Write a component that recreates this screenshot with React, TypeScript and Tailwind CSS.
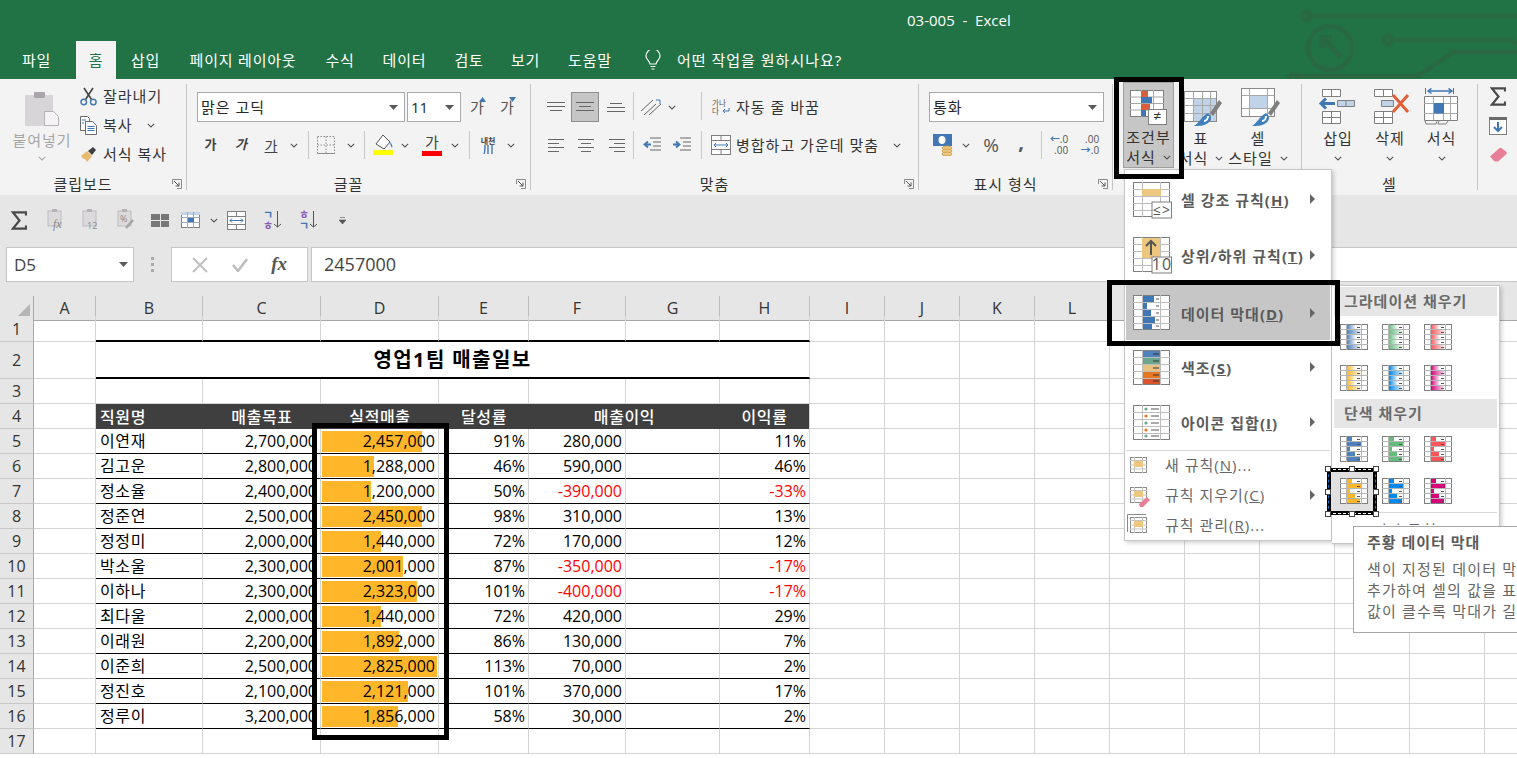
import React from "react";

const GRID = "grid grid-cols-[34px_62px_107px_118px_118px_90px_97px_94px_90px_repeat(10,75px)]";
const CELL = "border-r border-b border-[#d4d4d4] overflow-hidden whitespace-nowrap flex items-center";

const rows: [string, string, string, string, string, string, number][] = [
  ["이연재", "2,700,000", "2,457,000", "91%", "280,000", "11%", 100],
  ["김고운", "2,800,000", "1,288,000", "46%", "590,000", "46%", 52],
  ["정소율", "2,400,000", "1,200,000", "50%", "-390,000", "-33%", 49],
  ["정준연", "2,500,000", "2,450,000", "98%", "310,000", "13%", 100],
  ["정정미", "2,000,000", "1,440,000", "72%", "170,000", "12%", 59],
  ["박소울", "2,300,000", "2,001,000", "87%", "-350,000", "-17%", 81],
  ["이하나", "2,300,000", "2,323,000", "101%", "-400,000", "-17%", 95],
  ["최다울", "2,000,000", "1,440,000", "72%", "420,000", "29%", 59],
  ["이래원", "2,200,000", "1,892,000", "86%", "130,000", "7%", 77],
  ["이준희", "2,500,000", "2,825,000", "113%", "70,000", "2%", 115],
  ["정진호", "2,100,000", "2,121,000", "101%", "370,000", "17%", 86],
  ["정루이", "3,200,000", "1,856,000", "58%", "30,000", "2%", 76],
];

const tabs: [string, string][] = [
  ["파일", "w-[57px]"],
  ["삽입", "w-[57px] ml-px"],
  ["페이지 레이아웃", "w-[138px]"],
  ["수식", "w-[56px]"],
  ["데이터", "w-[73px]"],
  ["검토", "w-[56px]"],
  ["보기", "w-[57px]"],
  ["도움말", "w-[72px]"],
];

const Chev = ({ c = "#555" }: { c?: string }) => (
  <svg width="8" height="5" viewBox="0 0 8 5" className="shrink-0">
    <path d="M.8.8 4 4 7.2.8" fill="none" stroke={c} strokeWidth="1.1" />
  </svg>
);

const Caret = () => (
  <svg width="9" height="5" viewBox="0 0 9 5" className="shrink-0">
    <path d="M0 0h9L4.5 5z" fill="#5a5a5a" />
  </svg>
);

const Launcher = () => (
  <svg width="10" height="10" viewBox="0 0 10 10">
    <path d="M.5 5V.5H9.5V9.5H5" fill="none" stroke="#8a8a8a" />
    <path d="M2 2l5 5M7 3.5V7H3.5" fill="none" stroke="#555" />
  </svg>
);

const Slot = ({ className = "", children }: { className?: string; children?: React.ReactNode }) => (
  <div className={`flex items-center justify-center shrink-0 h-full ${className}`}>{children}</div>
);

const VSep = ({ className = "" }: { className?: string }) => <div className={`w-px h-[28px] bg-[#c8c8c8] shrink-0 ${className}`} />;

const Group = ({ label, launch, className, children }: { label?: string; launch?: boolean; className: string; children: React.ReactNode }) => (
  <div className={`h-[106px] border-r border-[#c6c6c6] shrink-0 ${className}`}>
    <div className="h-[88px]">{children}</div>
    <div className={`h-[24px] grid items-center text-[15px] tracking-[1px] text-[#333] ${launch ? "grid-cols-[1fr_auto_1fr_20px]" : "grid-cols-[1fr_auto_1fr]"}`}>
      <span />
      <span>{label}</span>
      <span />
      {launch && (
        <span className="flex justify-end pr-[4px]">
          <Launcher />
        </span>
      )}
    </div>
  </div>
);

const Lines = ({ w = 18, h = 14, ys, xs, c = "#666" }: { w?: number; h?: number; ys: number[]; xs: [number, number][]; c?: string }) => (
  <svg width={w} height={h} viewBox={`0 0 ${w} ${h}`}>
    {ys.map((y, i) => (
      <path key={i} d={`M${xs[i][0]} ${y + 0.5}H${xs[i][1]}`} stroke={c} />
    ))}
  </svg>
);

const Sigma = () => (
  <svg width="16" height="19" viewBox="0 0 16 19">
    <path d="M15 4.5V1.3H1.8L8.5 9.5 1.8 17.7H15v-3.2" fill="none" stroke="#4a4a4a" strokeWidth="2.2" />
  </svg>
);

// big table style icons for the menu, drawn on a 37x35 sheet
const Sheet = ({ children, rows: n = 5 }: { children?: React.ReactNode; rows?: number }) => (
  <svg width="37" height="35" viewBox="0 0 37 35" className="shrink-0 overflow-visible">
    <rect x=".5" y=".5" width="36" height="34" fill="#fff" stroke="#7f7f7f" />
    {Array.from({ length: n - 1 }).map((_, i) => (
      <path key={i} d={`M0 ${7.5 + i * 7}H37`} stroke="#bdbdbd" />
    ))}
    <path d="M9.5 0V35M27.5 0V35" stroke="#bdbdbd" />
    {children}
  </svg>
);

const MenuBox = ({ t, fs = 16 }: { t: string; fs?: number }) => (
  <g>
    <rect x="19" y="20" width="19.5" height="16" fill="#fff" stroke="#7f7f7f" />
    <text x="29" y="33" fontSize={fs} fontWeight="400" fill="#555" textAnchor="middle">{t}</text>
  </g>
);

const SmallSheet = ({ children }: { children?: React.ReactNode }) => (
  <svg width="17" height="17" viewBox="0 0 17 17" className="shrink-0 overflow-visible">
    <rect x=".5" y=".5" width="16" height="15" fill="#fff" stroke="#8a8a8a" />
    <path d="M4.5 0V16M12.5 0V16M0 3.5H17M0 8H17M0 12H17" stroke="#c4c4c4" />
    <rect x="4" y="4" width="9" height="6" fill="#eec77f" />
    {children}
  </svg>
);

const BARS = [5, 14, 3, 8, 13];

const BarIcon = ({ color, grad, id }: { color: string; grad?: boolean; id: string }) => (
  <svg width="28" height="26" viewBox="0 0 28 26" className="shrink-0">
    {grad && (
      <defs>
        <linearGradient id={id}>
          <stop offset="0" stopColor={color} />
          <stop offset="1" stopColor={color} stopOpacity=".12" />
        </linearGradient>
      </defs>
    )}
    <rect x=".5" y=".5" width="27" height="25" fill="#fff" stroke="#7f7f7f" />
    <path d="M6.5 0V26M21.5 0V26M0 5.5H28M0 10.5H28M0 15.5H28M0 20.5H28" stroke="#b5b5b5" />
    {BARS.map((b, i) => (
      <rect key={i} x="7" y={1 + i * 5} width={grad ? Math.max(b, 8) : b} height="4" fill={grad ? `url(#${id})` : color} />
    ))}
    {BARS.map((_, i) => (
      <path key={i} d={`M17 ${3.5 + i * 5}H20`} stroke="#555" />
    ))}
  </svg>
);

const Brush = () => (
  <g>
    <path d="M28 24 37 11l3 3-9 13z" fill="#7f7f7f" />
    <path d="M26 24c4 3 4 7 0 10-4 3-9 3-14 3 5-3 7-9 14-13z" fill="#3f7fbf" />
    <path d="M22 32c2 0 4-2 4-5" fill="none" stroke="#fff" strokeWidth="2" />
  </g>
);

const BigBtn = ({ icon, l1, l2, w, active }: { icon: React.ReactNode; l1: string; l2?: string; w: string; active?: boolean }) => (
  <div className={`flex flex-col items-center shrink-0 ${w} ${active ? "h-[86px] -mt-[2px] pt-[6px] bg-[#c6c6c6] border border-[#a0a0a0]" : "h-[86px] -mt-[2px] pt-[6px]"}`}>
    <div className="h-[40px] flex items-center justify-center">{icon}</div>
    <div className="h-[20px] leading-[20px] text-[15px] tracking-[1px] whitespace-nowrap text-[#333]">{l1}</div>
    <div className="h-[20px] flex items-center gap-[7px] text-[15px] tracking-[1px] whitespace-nowrap text-[#333]">
      {l2 && <span>{l2}</span>}
      <Chev />
    </div>
  </div>
);

const Arrow = () => (
  <svg width="6" height="10" viewBox="0 0 6 10" className="mr-[14px] shrink-0">
    <path d="M0 0l5 5-5 5z" fill="#666" />
  </svg>
);

const MenuItem = ({ icon, label, k, cls = "h-[55px]", hl }: { icon: React.ReactNode; label: string; k: string; cls?: string; hl?: boolean }) => (
  <div className={`flex items-center pl-[7px] mx-px text-[15px] tracking-[1px] font-bold text-[#5a5a5a] ${cls} ${hl ? "bg-[#c6c6c6] text-[#3a3a3a]" : ""}`}>
    {icon}
    <span className="ml-[11px] pt-[3px] flex-1 whitespace-nowrap">
      {label}(<u>{k}</u>)
    </span>
    <Arrow />
  </div>
);

const SmallItem = ({ icon, label, k, tail, arrow }: { icon: React.ReactNode; label: string; k: string; tail?: string; arrow?: boolean }) => (
  <div className="h-[30px] flex items-center pl-[4px] mx-px text-[15px] tracking-[1px] text-[#666]">
    <div className="w-[35px]">{icon}</div>
    <span className="flex-1 whitespace-nowrap">
      {label}(<u>{k}</u>){tail}
    </span>
    {arrow && <Arrow />}
  </div>
);

const Heading = ({ children }: { children: React.ReactNode }) => (
  <div className="h-[29px] mx-[2px] bg-[#e6e6e6] flex items-center pl-[10px] text-[15px] tracking-[1px] font-bold text-[#6a6a6a]">{children}</div>
);

const Blanks = ({ n, cls = "" }: { n: number; cls?: string }) => (
  <>
    {Array.from({ length: n }).map((_, i) => (
      <div key={i} className={`border-r border-b border-[#d4d4d4] ${cls}`} />
    ))}
  </>
);

const RowHead = ({ n }: { n: number }) => (
  <div className="bg-[#e6e6e6] border-r border-r-[#a8a8a8] border-b border-b-[#c8c8c8] flex items-center justify-center text-[16px] text-[#333]">{n}</div>
);

export default function App() {
  return (
    <div className="relative w-[1517px] h-[758px] overflow-hidden bg-white text-[#262626] font-['Open_Sans','Noto_Sans_CJK_KR',sans-serif]">
      {/* title + tabs */}
      <div className="relative h-[79px] bg-[#217346] text-white overflow-hidden">
        <svg width="240" height="79" viewBox="0 0 240 79" className="absolute right-0 top-0" fill="none" stroke="#296842" strokeWidth="4.5">
          <circle cx="29" cy="16" r="4" />
          <path d="M33 16H240" />
          <circle cx="53" cy="48" r="22" />
          <path d="M45 48V38H55M46 39L64 57" strokeWidth="5.5" />
          <circle cx="111" cy="40" r="4" />
          <path d="M115 40H234l6 4" />
          <path d="M240 52H176L141 76H20" />
          <circle cx="16" cy="78" r="4" />
        </svg>
        <div className="h-[40px] pl-[907px] flex items-center text-[15px] whitespace-pre">03-005  -  Excel</div>
        <div className="relative mt-px flex h-[38px] pl-[8px] text-[15px] tracking-[0.8px]">
          <div className={`flex items-center justify-center ${tabs[0][1]}`}>{tabs[0][0]}</div>
          <div className="ml-[11px] w-[40px] bg-[#f3f3f3] text-[#217346] flex items-center justify-center">홈</div>
          {tabs.slice(1).map(([t, w]) => (
            <div key={t} className={`flex items-center justify-center whitespace-nowrap ${w}`}>{t}</div>
          ))}
          <div className="ml-[19px] flex items-center">
            <svg width="16" height="20" viewBox="0 0 16 20" fill="none" stroke="#fff" strokeWidth="1.2">
              <path d="M5 14c0-3-4-4-4-8a7 7 0 0 1 14 0c0 4-4 5-4 8zM5.500 16.500h5M6.500 19h3" />
            </svg>
            <span className="ml-[16px] tracking-[1px]">어떤 작업을 원하시나요?</span>
          </div>
        </div>
      </div>

      {/* ribbon */}
      <div className="h-[117px] bg-[#f3f3f3] border-b border-[#cfcfcf] pt-[5px] flex">
        <Group label="클립보드" launch className="w-[187px]">
          <div className="flex h-full">
            <div className="w-[78px] pl-[6px] pt-[8px] flex flex-col items-center">
              <svg width="35" height="34" viewBox="0 0 35 34">
                <rect x="0" y="3" width="28" height="31" rx="1" fill="#d8d5d8" />
                <rect x="9" y="0" width="11" height="6" rx="1" fill="#a8a6a8" />
                <path d="M19.500 19.500h9l5 5v9h-14z" fill="#f5f3f5" stroke="#b5b2b5" />
              </svg>
              <div className="mt-[2px] h-[24px] leading-[24px] text-[15px] tracking-[1px] text-[#a6a6a6] whitespace-nowrap">붙여넣기</div>
              <div className="mt-[4px]"><Chev c="#a6a6a6" /></div>
            </div>
            <div className="-mt-[2px] text-[15px] tracking-[1px] text-[#333]">
              <div className="h-[29px] flex items-center">
                <Slot className="w-[21px]">
                  <svg width="17" height="19" viewBox="0 0 17 19" fill="none">
                    <path d="M4 1l7.500 11.500M13 1L5.500 12.500" stroke="#454545" strokeWidth="1.6" />
                    <circle cx="3.700" cy="15" r="2.800" stroke="#3f78b5" strokeWidth="1.4" />
                    <circle cx="13.300" cy="15" r="2.800" stroke="#3f78b5" strokeWidth="1.4" />
                  </svg>
                </Slot>
                <span className="ml-[4px] whitespace-nowrap">잘라내기</span>
              </div>
              <div className="h-[29px] flex items-center">
                <Slot className="w-[21px]">
                  <svg width="17" height="19" viewBox="0 0 17 19" fill="none" stroke="#6a6a6a">
                    <path d="M.5.5h7l2 2v12H.5z" fill="#fff" />
                    <path d="M5.500 5.500h7l4 4v9h-11z" fill="#fff" />
                    <path d="M7.500 10.500h7M7.500 12.500h7M7.500 14.500h7M2 4h4M2 7h2" stroke="#3f78b5" />
                  </svg>
                </Slot>
                <span className="ml-[4px] whitespace-nowrap">복사</span>
                <span className="ml-[14px]"><Chev /></span>
              </div>
              <div className="h-[29px] flex items-center">
                <Slot className="w-[21px]">
                  <svg width="17" height="15" viewBox="0 0 17 15">
                    <path d="M1 9l6-5 5 5-5 6c-1-1-1-3-3-3-1 0-2-2-3-3z" fill="#e9b871" />
                    <path d="M8 4l5-4 3 3-4 5z" fill="#404040" />
                  </svg>
                </Slot>
                <span className="ml-[4px] whitespace-nowrap">서식 복사</span>
              </div>
            </div>
          </div>
        </Group>

        <Group label="글꼴" launch className="w-[344px]">
          <div className="pt-[8px] pl-[10px] h-[38px] flex">
            <div className="w-[208px] h-[30px] bg-white border border-[#a9a9a9] flex items-center justify-between pl-[3px] pr-[6px] text-[15px] tracking-[1px]">
              <span>맑은 고딕</span>
              <Caret />
            </div>
            <div className="ml-[2px] w-[54px] h-[30px] bg-white border border-[#a9a9a9] flex items-center justify-between pl-[3px] pr-[6px] text-[15px]">
              <span>11</span>
              <Caret />
            </div>
            <Slot className="ml-px w-[32px] relative text-[15px] text-[#555]">
              <span>가</span>
              <svg width="7" height="5" viewBox="0 0 7 5" className="-ml-[5px] -mt-[16px]"><path d="M0 5L3.500 0 7 5z" fill="#3f78b5" /></svg>
            </Slot>
            <Slot className="w-[28px] text-[15px] text-[#555]">
              <span>가</span>
              <svg width="7" height="5" viewBox="0 0 7 5" className="-ml-[5px] -mt-[16px]"><path d="M0 0h7L3.500 5z" fill="#3f78b5" /></svg>
            </Slot>
          </div>
          <div className="mt-[8px] h-[30px] pl-[8px] flex items-center text-[#444]">
            <Slot className="w-[31px] font-bold text-[13px]">가</Slot>
            <Slot className="w-[30px] font-bold italic text-[13px]">가</Slot>
            <Slot className="w-[30px] text-[14px] underline">가</Slot>
            <Slot className="w-[16px]"><Chev /></Slot>
            <VSep className="ml-[6px]" />
            <Slot className="w-[34px]">
              <svg width="18" height="18" viewBox="0 0 18 18" fill="none">
                <path d="M.5 .5h17v17H.5z M9 .5v17M.5 9h17" stroke="#8d8d8d" strokeDasharray="1.5 1.5" />
                <path d="M.5 17.500h17" stroke="#8d8d8d" />
              </svg>
            </Slot>
            <Slot className="w-[15px]"><Chev /></Slot>
            <VSep className="ml-[6px]" />
            <Slot className="w-[36px]">
              <svg width="20" height="22" viewBox="0 0 20 22">
                <path d="M10 1l7 7-6 7-8-5z" fill="#fff" stroke="#555" />
                <path d="M17 8c2 2 3 4 2 6-1-2-2-4-2-6z" fill="#3f78b5" />
                <rect x="0" y="16" width="20" height="5" fill="#ffff00" />
              </svg>
            </Slot>
            <Slot className="w-[8px]"><Chev /></Slot>
            <Slot className="ml-[4px] w-[38px] flex-col">
              <span className="text-[15px] leading-[16px] text-[#444]">가</span>
              <span className="w-[20px] h-[5px] bg-[#ff0000] mt-[1px]" />
            </Slot>
            <Slot className="w-[8px]"><Chev /></Slot>
            <VSep className="ml-[10px]" />
            <Slot className="w-[36px] flex-col">
              <span className="text-[8px] leading-[9px] font-bold text-[#444]">내천</span>
              <svg width="10" height="9" viewBox="0 0 10 9" fill="none" stroke="#3f78b5" strokeWidth="1.4"><path d="M1 9c1-2 1-5 1-9M5 9V0M9 9V0" /></svg>
            </Slot>
            <Slot className="w-[10px]"><Chev /></Slot>
          </div>
        </Group>

        <Group label="맞춤" launch className="w-[388px]">
          <div className="pt-[8px] pl-[9px] h-[38px] flex items-stretch">
            <Slot className="w-[31px]"><Lines ys={[2, 6, 10]} xs={[[0, 18], [0, 18], [3, 15]]} /></Slot>
            <Slot className="w-[28px] bg-[#c6c6c6] border border-[#8f8f8f]"><Lines ys={[2, 6, 10]} xs={[[0, 18], [3, 15], [0, 18]]} /></Slot>
            <Slot className="w-[34px]"><Lines ys={[3, 7, 11]} xs={[[3, 15], [0, 18], [0, 18]]} /></Slot>
            <VSep />
            <Slot className="w-[34px]">
              <svg width="22" height="20" viewBox="0 0 22 20" fill="none" stroke="#666">
                <path d="M1 14L13 3M4 18L16 7M9 18L21 7" />
                <path d="M16 3l4 0 0 4" stroke="#3f78b5" />
              </svg>
            </Slot>
            <Slot className="w-[8px]"><Chev /></Slot>
            <VSep className="ml-[25px]" />
            <div className="ml-[10px] flex items-center">
              <svg width="18" height="18" viewBox="0 0 18 18">
                <text x="0" y="8" fontSize="7.5" fill="#555">가나</text>
                <text x="0" y="16" fontSize="7.5" fill="#555">다</text>
                <path d="M17 10v3h-6m2-2l-2 2 2 2" fill="none" stroke="#3f78b5" />
              </svg>
              <span className="ml-[6px] text-[15px] tracking-[1px] whitespace-nowrap text-[#333]">자동 줄 바꿈</span>
            </div>
          </div>
          <div className="mt-[8px] h-[30px] pl-[9px] flex items-center">
            <Slot className="w-[31px]"><Lines w={16} ys={[1, 5, 9, 13]} xs={[[0, 16], [0, 11], [0, 16], [0, 11]]} /></Slot>
            <Slot className="w-[30px]"><Lines w={16} ys={[1, 5, 9, 13]} xs={[[0, 16], [3, 13], [0, 16], [3, 13]]} /></Slot>
            <Slot className="w-[32px]"><Lines w={16} ys={[1, 5, 9, 13]} xs={[[0, 16], [5, 16], [0, 16], [5, 16]]} /></Slot>
            <VSep />
            <Slot className="w-[36px]">
              <svg width="18" height="16" viewBox="0 0 18 16" fill="none">
                <path d="M7 1h11M10 5h8M10 9h8M7 13h11" stroke="#666" />
                <path d="M8 7.500H2m3-3L1.500 7.500 5 10.500" stroke="#3f78b5" strokeWidth="1.8" />
              </svg>
            </Slot>
            <Slot className="w-[24px]">
              <svg width="18" height="16" viewBox="0 0 18 16" fill="none">
                <path d="M7 1h11M10 5h8M10 9h8M7 13h11" stroke="#666" />
                <path d="M0 7.500h6m-3-3L6.500 7.500 3 10.500" stroke="#3f78b5" strokeWidth="1.8" />
              </svg>
            </Slot>
            <VSep className="ml-[7px]" />
            <div className="ml-[9px] flex items-center">
              <svg width="20" height="20" viewBox="0 0 20 20" fill="none">
                <rect x=".5" y=".5" width="19" height="19" fill="#fff" stroke="#7f7f7f" />
                <path d="M0 5.500h20M0 14.500h20M10 0v5M10 15v5" stroke="#7f7f7f" />
                <path d="M3 10h14M5 8l-2 2 2 2M15 8l2 2-2 2" stroke="#3f78b5" />
              </svg>
              <span className="ml-[5px] text-[15px] tracking-[1px] whitespace-nowrap text-[#333]">병합하고 가운데 맞춤</span>
              <span className="ml-[14px]"><Chev /></span>
            </div>
          </div>
        </Group>

        <Group label="표시 형식" launch className="w-[194px]">
          <div className="pt-[8px] pl-[10px] h-[38px]">
            <div className="w-[175px] h-[30px] bg-white border border-[#a9a9a9] flex items-center justify-between pl-[3px] pr-[6px] text-[15px] tracking-[1px]">
              <span>통화</span>
              <Caret />
            </div>
          </div>
          <div className="mt-[8px] h-[30px] pl-[14px] flex items-center">
            <svg width="20" height="22" viewBox="0 0 20 22">
              <rect x="0" y="0" width="19" height="12" fill="#3f78b5" />
              <ellipse cx="9" cy="6" rx="3.500" ry="4" fill="#fff" />
              <ellipse cx="14" cy="14" rx="5" ry="2" fill="#eec77f" stroke="#d0a050" />
              <ellipse cx="14" cy="17" rx="5" ry="2" fill="#eec77f" stroke="#d0a050" />
              <ellipse cx="14" cy="20" rx="5" ry="2" fill="#eec77f" stroke="#d0a050" />
            </svg>
            <span className="ml-[9px]"><Chev /></span>
            <Slot className="ml-[5px] w-[32px] text-[19px] text-[#555]">%</Slot>
            <Slot className="w-[28px] text-[20px] font-bold text-[#555] pb-[6px]">,</Slot>
            <VSep className="ml-[6px]" />
            <Slot className="w-[34px]">
              <div className="text-[10px] leading-[11px] text-[#555] text-right"><span className="text-[#3f78b5] font-bold">←</span>.0<br />.00</div>
            </Slot>
            <Slot className="w-[28px]">
              <div className="text-[10px] leading-[11px] text-[#555] text-right">.00<br /><span className="text-[#3f78b5] font-bold">→</span>.0</div>
            </Slot>
          </div>
        </Group>

        <Group className="w-[189px]">
          <div className="pl-[10px] flex">
            <BigBtn
              active
              w="w-[51px]"
              l1="조건부"
              l2="서식"
              icon={
                <svg width="38" height="36" viewBox="0 0 38 36">
                  <rect x=".5" y=".5" width="33" height="26" fill="#fff" stroke="#7f7f7f" />
                  <path d="M11.500 0v27M23.500 0v27M0 7h34M0 13.500h34M0 20h34" stroke="#a8a8a8" />
                  <rect x="11" y="1" width="7" height="6" fill="#d9603b" />
                  <rect x="11" y="7" width="11" height="6" fill="#3f78b5" />
                  <rect x="11" y="14" width="9" height="6" fill="#d9603b" />
                  <rect x="11" y="20" width="5" height="6" fill="#3f78b5" />
                  <rect x="18.500" y="19.500" width="18" height="15" fill="#fff" stroke="#7f7f7f" />
                  <text x="27.500" y="31" fontSize="14" fill="#333" textAnchor="middle">≠</text>
                </svg>
              }
            />
            <BigBtn
              w="w-[54px]"
              l1="표"
              l2="서식"
              icon={
                <svg width="38" height="38" viewBox="0 0 38 38" className="overflow-visible">
                  <rect x="2.500" y="2.500" width="32" height="30" fill="#fff" stroke="#8a8a8a" />
                  <rect x="12" y="10" width="22" height="22" fill="#c0d3e8" />
                  <path d="M11.500 3v29M20.500 3v29M28.500 3v29M3 9.500h31M3 16.500h31M3 24.500h31" stroke="#a8a8a8" />
                  <Brush />
                </svg>
              }
            />
            <BigBtn
              w="w-[60px]"
              l1="셀"
              l2="스타일"
              icon={
                <svg width="38" height="38" viewBox="0 0 38 38" className="overflow-visible">
                  <rect x="2.500" y="-.5" width="33" height="28" fill="#fff" stroke="#8a8a8a" />
                  <rect x="11" y="6" width="18" height="13" fill="#c0d3e8" />
                  <path d="M10.500 0v27M28.500 0v27M3 6.500h32M3 19.500h32" stroke="#a8a8a8" />
                  <g transform="translate(1 0)"><Brush /></g>
                </svg>
              }
            />
          </div>
        </Group>

        <Group label="셀" className="w-[176px]">
          <div className="pl-[10px] flex">
            <BigBtn
              w="w-[52px]"
              l1="삽입"
              icon={
                <svg width="34" height="36" viewBox="0 0 34 36" fill="#fff" stroke="#7f7f7f" className="overflow-visible">
                  <path d="M1.500 -.5h18v7h-18zM10.500 -.5v7" />
                  <path d="M1.500 21.500h18v12h-18zM10.500 21.500v12M1.500 27.500h18" />
                  <path d="M16.500 10.500h17v6h-17zM25 10.500v6" fill="#c0d3e8" />
                  <path d="M14 13.500H0M5 8.500l-5 5 5 5" fill="none" stroke="#3f78b5" strokeWidth="3" />
                </svg>
              }
            />
            <BigBtn
              w="w-[52px]"
              l1="삭제"
              icon={
                <svg width="35" height="36" viewBox="0 0 35 36" fill="#fff" stroke="#7f7f7f" className="overflow-visible">
                  <path d="M1.500 -.5h18v7h-18zM10.500 -.5v7" />
                  <path d="M1.500 21.500h18v12h-18zM10.500 21.500v12M1.500 27.500h18" />
                  <path d="M8.500 10.500h12v6h-12z" fill="#c0d3e8" />
                  <path d="M20 5l15 17M35 5L20 22" fill="none" stroke="#e0603a" strokeWidth="3" />
                </svg>
              }
            />
            <BigBtn
              w="w-[51px]"
              l1="서식"
              icon={
                <svg width="35" height="40" viewBox="0 0 35 40" fill="none" stroke="#7f7f7f">
                  <path d="M1.500 0v6M29.500 0v6" stroke="#3f78b5" />
                  <path d="M4 3h24M7.500 .5 4 3l3.500 2.500M24.500 .5 28 3l-3.500 2.500" stroke="#3f78b5" strokeWidth="1.5" />
                  <path d="M.5 8.500h33v24H.5z" fill="#fff" />
                  <path d="M9.500 9v23M19.500 9v23M26.500 9v23M0 15.500h34M0 25.500h34" stroke="#a8a8a8" />
                  <rect x="10" y="15" width="10" height="10.500" fill="#3f78b5" stroke="none" />
                  <path d="M1 33l1 3h10l1-3M15 33l-1 3h8l2-3" />
                </svg>
              }
            />
          </div>
        </Group>

        <div className="w-[46px] -mt-[2px] flex flex-col items-center">
          <div className="h-[29px] flex items-center"><Sigma /></div>
          <div className="h-[29px] flex items-center">
            <svg width="18" height="18" viewBox="0 0 18 18">
              <rect x=".5" y=".5" width="17" height="17" fill="#fff" stroke="#7f7f7f" />
              <rect x="0" y="0" width="18" height="3" fill="#6a6a6a" />
              <path d="M9 5v9M5 10l4 4 4-4" fill="none" stroke="#3f78b5" strokeWidth="2" />
            </svg>
          </div>
          <div className="h-[29px] flex items-center">
            <svg width="18" height="15" viewBox="0 0 18 15">
              <path d="M1 9.500 10 1.500c1-1 2-1 3 0l4 3c1 1 1 2 0 3l-8 7H5.500z" fill="#e87f96" />
            </svg>
          </div>
        </div>
      </div>

      {/* quick access bar */}
      <div className="h-[51px] bg-[#e6e6e6] pl-[11px] flex items-center text-[#555] -mt-px">
        <Sigma />
        <div className="ml-[20px] w-[18px]">
          <svg width="18" height="23" viewBox="0 0 18 23">
            <rect x="1" y="2" width="13" height="15" fill="#dcdadc" stroke="#bdbbbd" />
            <rect x="5" y="0" width="5" height="3" fill="#b5b3b5" />
            <text x="6" y="19" fontSize="12" fontStyle="italic" fontFamily="Liberation Serif" fill="#8a8a8a">fx</text>
          </svg>
        </div>
        <div className="ml-[17px] w-[18px]">
          <svg width="18" height="23" viewBox="0 0 18 23">
            <rect x="1" y="2" width="13" height="15" fill="#dcdadc" stroke="#bdbbbd" />
            <rect x="5" y="0" width="5" height="3" fill="#b5b3b5" />
            <text x="5" y="20" fontSize="9" fill="#8a8a8a">12</text>
          </svg>
        </div>
        <div className="ml-[17px] w-[18px]">
          <svg width="18" height="23" viewBox="0 0 18 23">
            <rect x="1" y="2" width="13" height="15" fill="#dcdadc" stroke="#bdbbbd" />
            <rect x="5" y="0" width="5" height="3" fill="#b5b3b5" />
            <text x="3" y="13" fontSize="9" fill="#8a8a8a">%</text>
            <path d="M9 19l7-8" stroke="#a5a5a5" strokeWidth="2.5" />
          </svg>
        </div>
        <div className="ml-[16px] w-[18px] grid grid-cols-2 gap-px">
          <span className="h-[6px] bg-[#777]" />
          <span className="h-[6px] bg-[#777]" />
          <span className="h-[6px] bg-[#777]" />
          <span className="h-[6px] bg-[#777]" />
        </div>
        <div className="ml-[12px] w-[19px]">
          <svg width="19" height="17" viewBox="0 0 19 17">
            <rect x=".5" y=".5" width="18" height="15" fill="#fff" stroke="#7f7f7f" />
            <rect x="0" y="0" width="19" height="3" fill="#c0d3e8" />
            <path d="M0 5.500h19M0 10.500h19M6.500 0v16M12.500 0v16" stroke="#9ab" />
            <rect x="7" y="6" width="6" height="4" fill="#3f78b5" />
          </svg>
        </div>
        <div className="ml-[10px]"><Chev /></div>
        <div className="ml-[9px] w-[19px]">
          <svg width="19" height="19" viewBox="0 0 19 19" fill="none">
            <rect x=".5" y=".5" width="18" height="18" fill="#fff" stroke="#7f7f7f" />
            <path d="M0 5.500h19M0 13.500h19M9.500 0v5M9.500 14v5" stroke="#7f7f7f" />
            <path d="M3 9.500h13M5 7.500l-2 2 2 2M14 7.500l2 2-2 2" stroke="#3f78b5" />
          </svg>
        </div>
        <div className="ml-[17px] w-[19px]">
          <svg width="20" height="24" viewBox="0 0 20 24">
            <text x="0" y="10" fontSize="11" fontWeight="700" fill="#3f78b5">ㄱ</text>
            <text x="0" y="21" fontSize="11" fontWeight="700" fill="#8a5bb5">ㅎ</text>
            <path d="M14.500 2v16M11 15l3.500 3 3.500-3" fill="none" stroke="#555" />
          </svg>
        </div>
        <div className="ml-[17px] w-[19px]">
          <svg width="20" height="24" viewBox="0 0 20 24">
            <text x="0" y="10" fontSize="11" fontWeight="700" fill="#8a5bb5">ㅎ</text>
            <text x="0" y="21" fontSize="11" fontWeight="700" fill="#3f78b5">ㄱ</text>
            <path d="M14.500 2v16M11 15l3.500 3 3.500-3" fill="none" stroke="#555" />
          </svg>
        </div>
        <div className="ml-[21px]">
          <svg width="7" height="7" viewBox="0 0 7 7"><path d="M1 .5h5M0 3h7L3.500 7z" fill="#555" stroke="#555" strokeWidth=".6" /></svg>
        </div>
      </div>

      {/* formula bar */}
      <div className="h-[50px] bg-[#e6e6e6] pt-px pl-[6px] flex items-start">
        <div className="w-[128px] h-[35px] bg-white border border-[#c6c6c6] flex items-center justify-between pl-[7px] pr-[5px] text-[17px] text-[#444]">
          <span>D5</span>
          <Caret />
        </div>
        <div className="w-[37px] h-[35px] flex flex-col items-center justify-center gap-[3px]">
          <span className="w-[3px] h-[3px] bg-[#aaa]" />
          <span className="w-[3px] h-[3px] bg-[#aaa]" />
          <span className="w-[3px] h-[3px] bg-[#aaa]" />
        </div>
        <div className="w-[137px] h-[35px] bg-white border border-[#c6c6c6] flex items-center justify-around px-[8px]">
          <svg width="16" height="16" viewBox="0 0 16 16"><path d="M1 1l14 14M15 1L1 15" stroke="#bdbdbd" strokeWidth="1.8" /></svg>
          <svg width="16" height="14" viewBox="0 0 16 14"><path d="M1 7l5 6L15 1" fill="none" stroke="#bdbdbd" strokeWidth="2.6" /></svg>
          <span className="font-['Liberation_Serif',serif] italic font-bold text-[19px] text-[#555]">fx</span>
        </div>
        <div className="ml-[3px] flex-1 h-[35px] bg-white border-y border-l border-[#c6c6c6] flex items-center pl-[12px] text-[18px] text-[#444]">2457000</div>
      </div>

      {/* sheet */}
      <div className={`${GRID} h-[20px] text-[16px] text-[#333]`}>
        <div className="bg-[#e6e6e6] border-r border-b border-[#a8a8a8] flex items-end justify-end pr-[3px] pb-px">
          <svg width="15" height="15" viewBox="0 0 15 15"><path d="M15 0v15H0z" fill="#b5b5b5" /></svg>
        </div>
        {["A", "B", "C", "D", "E", "F", "G", "H", "I", "J", "K", "L", "", "", "", "", "", ""].map((c, i) => (
          <div key={i} className="bg-[#e6e6e6] border-r border-r-[#bdbdbd] border-b border-b-[#a8a8a8] flex items-center justify-center">{c}</div>
        ))}
      </div>

      <div className={`${GRID} h-[26px]`}>
        <RowHead n={1} />
        <Blanks n={1} />
        <Blanks n={7} cls="border-b-2 border-b-black" />
        <Blanks n={10} />
      </div>
      <div className={`${GRID} h-[37px]`}>
        <RowHead n={2} />
        <Blanks n={1} />
        <div className="col-span-7 border-b-2 border-b-black border-r border-r-[#d4d4d4] flex items-center justify-center text-[20px] font-bold tracking-[1.4px] text-black">영업1팀 매출일보</div>
        <Blanks n={10} />
      </div>
      <div className={`${GRID} h-[25px]`}>
        <RowHead n={3} />
        <Blanks n={18} />
      </div>
      <div className={`${GRID} h-[25px]`}>
        <RowHead n={4} />
        <Blanks n={1} />
        <div className="bg-[#3f3f3f] text-white text-[16px] font-medium tracking-[0.6px] pl-[4px] flex items-center">직원명</div>
        <div className="bg-[#3f3f3f] text-white text-[16px] font-medium tracking-[0.6px] flex items-center justify-center">매출목표</div>
        <div className="bg-[#3f3f3f] text-white text-[16px] font-medium tracking-[0.6px] flex items-center justify-center">실적매출</div>
        <div className="bg-[#3f3f3f] text-white text-[16px] font-medium tracking-[0.6px] flex items-center justify-center">달성률</div>
        <div className="col-span-2 bg-[#3f3f3f] text-white text-[16px] font-medium tracking-[0.6px] flex items-center justify-center">매출이익</div>
        <div className="bg-[#3f3f3f] text-white text-[16px] font-medium tracking-[0.6px] flex items-center justify-center border-r border-[#d4d4d4]">이익률</div>
        <Blanks n={10} />
      </div>
      {rows.map(([name, target, actual, rate, profit, margin, bar], i) => (
        <div key={name} className={`${GRID} h-[25px] text-[16px] text-black`}>
          <RowHead n={i + 5} />
          <Blanks n={1} />
          <div className={`${CELL} border-b-black pl-[4px] tracking-[0.6px]`}>{name}</div>
          <div className={`${CELL} border-b-black justify-end pr-[3px]`}>{target}</div>
          <div className={`${CELL} border-b-black justify-end pr-[3px] relative`}>
            <div className="absolute left-[1px] top-[2px] bottom-px bg-[#ffb628]" style={{ width: bar }} />
            <span className="relative">{actual}</span>
          </div>
          <div className={`${CELL} border-b-black justify-end pr-[3px]`}>{rate}</div>
          <div className={`${CELL} border-b-black justify-end pr-[3px] ${profit.startsWith("-") ? "text-[#ff0000]" : ""}`}>{profit}</div>
          <div className={`${CELL} border-b-black`} />
          <div className={`${CELL} border-b-black justify-end pr-[3px] ${margin.startsWith("-") ? "text-[#ff0000]" : ""}`}>{margin}</div>
          <Blanks n={10} />
        </div>
      ))}
      <div className={`${GRID} h-[25px]`}>
        <RowHead n={17} />
        <Blanks n={18} />
      </div>

      {/* conditional format dropdown */}
      <div className="absolute left-[1124px] top-[169px] w-[208px] h-[372px] bg-white border border-[#c6c6c6] shadow-[2px_2px_4px_rgba(0,0,0,0.18)] pt-px">
        <MenuItem
          cls="h-[56px]"
          label="셀 강조 규칙"
          k="H"
          icon={
            <Sheet>
              <rect x="9" y="7" width="19" height="7" fill="#eec77f" />
              <MenuBox t="≤>" fs={14} />
            </Sheet>
          }
        />
        <MenuItem
          label="상위/하위 규칙"
          k="T"
          icon={
            <Sheet>
              <rect x="9" y="1" width="18" height="20" fill="#eec77f" />
              <path d="M18 18V4M13 9l5-5 5 5" fill="none" stroke="#555" strokeWidth="2" />
              <MenuBox t="10" />
            </Sheet>
          }
        />
        <MenuItem
          hl
          cls="h-[55px] mt-[3px]"
          label="데이터 막대"
          k="D"
          icon={
            <Sheet>
              <rect x="10" y="1" width="11" height="6" fill="#3f78b5" />
              <rect x="10" y="8" width="4" height="6" fill="#3f78b5" />
              <rect x="10" y="15" width="8" height="6" fill="#3f78b5" />
              <rect x="10" y="22" width="12" height="6" fill="#3f78b5" />
              <rect x="10" y="29" width="9" height="5" fill="#3f78b5" />
              <path d="M23 4h3M23 11h3M23 18h3M23 25h3M23 31h3" stroke="#555" />
            </Sheet>
          }
        />
        <MenuItem
          cls="h-[54px]"
          label="색조"
          k="S"
          icon={
            <Sheet>
              <rect x="10" y="1" width="17" height="6" fill="#4f81bd" />
              <rect x="10" y="8" width="17" height="6" fill="#6aa78c" />
              <rect x="10" y="15" width="17" height="6" fill="#e8c27e" />
              <rect x="10" y="22" width="17" height="6" fill="#e87722" />
              <rect x="10" y="29" width="17" height="5" fill="#d9532c" />
              <path d="M20 4h6M20 11h6M20 18h6M20 25h6M20 31h6" stroke="#333" />
            </Sheet>
          }
        />
        <MenuItem
          cls="h-[56px]"
          label="아이콘 집합"
          k="I"
          icon={
            <Sheet>
              {[4, 11, 18, 25, 31].map((y, i) => (
                <g key={y}>
                  <circle cx="13" cy={y} r="1.6" fill={i % 2 ? "#e87722" : "#6aa78c"} />
                  <path d={`M18 ${y}h8`} stroke="#555" />
                </g>
              ))}
            </Sheet>
          }
        />
        <div className="h-px bg-[#d8d8d8] mx-px" />
        <div className="-mt-px">
          <SmallItem label="새 규칙" k="N" tail="..." icon={<SmallSheet />} />
          <SmallItem
            label="규칙 지우기"
            k="C"
            arrow
            icon={
              <SmallSheet>
                <path d="M9 17l8-7 3 3-7 7h-3z" fill="#e87f96" />
              </SmallSheet>
            }
          />
          <SmallItem
            label="규칙 관리"
            k="R"
            tail="..."
            icon={
              <SmallSheet>
                <path d="M-2.500 15V-2.500H16" fill="none" stroke="#8a8a8a" />
              </SmallSheet>
            }
          />
        </div>
      </div>

      {/* data bar submenu */}
      <div className="absolute left-[1332px] top-[285px] w-[168px] h-[259px] bg-white border border-[#c6c6c6] border-l-0 shadow-[2px_2px_4px_rgba(0,0,0,0.18)] pt-px">
        <Heading>그라데이션 채우기</Heading>
        <div className="grid grid-cols-[42px_42px_42px] grid-rows-[41px_42px] pl-[8px] items-center">
          <BarIcon id="g1" grad color="#4f81bd" />
          <BarIcon id="g2" grad color="#63be7b" />
          <BarIcon id="g3" grad color="#ff555a" />
          <BarIcon id="g4" grad color="#ffb628" />
          <BarIcon id="g5" grad color="#008aef" />
          <BarIcon id="g6" grad color="#d6007b" />
        </div>
        <Heading>단색 채우기</Heading>
        <div className="grid grid-cols-[42px_42px_42px] grid-rows-[42px_42px] pl-[8px] items-center">
          <BarIcon id="s1" color="#4f81bd" />
          <BarIcon id="s2" color="#63be7b" />
          <BarIcon id="s3" color="#ff555a" />
          <div className="relative w-[28px] h-[26px]">
            <div className="absolute -left-[13px] -top-[10px] w-[50px] h-[47px] bg-[#e0e0e0] border-[4px] border-black">
              <div className="absolute -inset-[3px] border border-dashed border-x-[#1177cc] border-y-white" />
              <span className="absolute -left-[6px] -top-[6px] w-[6px] h-[6px] bg-white border border-[#444]" />
              <span className="absolute left-[18px] -top-[6px] w-[6px] h-[6px] bg-white border border-[#444]" />
              <span className="absolute -right-[6px] -top-[6px] w-[6px] h-[6px] bg-white border border-[#444]" />
              <span className="absolute -left-[6px] top-[17px] w-[6px] h-[6px] bg-white border border-[#444]" />
              <span className="absolute -right-[6px] top-[17px] w-[6px] h-[6px] bg-white border border-[#444]" />
              <span className="absolute -left-[6px] -bottom-[6px] w-[6px] h-[6px] bg-white border border-[#444]" />
              <span className="absolute left-[18px] -bottom-[6px] w-[6px] h-[6px] bg-white border border-[#444]" />
              <span className="absolute -right-[6px] -bottom-[6px] w-[6px] h-[6px] bg-white border border-[#444]" />
            </div>
            <div className="relative"><BarIcon id="s4" color="#ffb628" /></div>
          </div>
          <BarIcon id="s5" color="#008aef" />
          <BarIcon id="s6" color="#d6007b" />
        </div>
        <div className="h-px bg-[#d8d8d8] mx-[2px]" />
        <div className="ml-[41px] mt-[6px] h-[6px] overflow-hidden text-[15px] leading-[22px] tracking-[1px] text-[#666] whitespace-nowrap">기타 규칙(<u>M</u>)...</div>
      </div>

      {/* tooltip, runs off the right side of the window */}
      <div className="absolute left-[1353px] top-[526px] w-[164px] h-[107px] bg-white border border-[#a8a8a8] border-r-0 pl-[13px] pt-[2px] text-[15px] tracking-[1.2px] text-[#666] whitespace-nowrap">
        <div className="h-[27px] leading-[27px] font-bold text-[#5a5a5a] tracking-[1px]">주황 데이터 막대</div>
        <div className="mt-[3px] h-[21px] leading-[21px]">색이 지정된 데이터 막</div>
        <div className="h-[21px] leading-[21px]">추가하여 셀의 값을 표</div>
        <div className="h-[21px] leading-[21px]">값이 클수록 막대가 길</div>
      </div>

      {/* black annotation boxes */}
      <div className="absolute left-[1114px] top-[77px] w-[70px] h-[102px] border-[5px] border-black" />
      <div className="absolute left-[1107px] top-[280px] w-[233px] h-[66px] border-[5px] border-black" />
      <div className="absolute left-[312px] top-[423px] w-[137px] h-[317px] border-[5px] border-black" />
    </div>
  );
}
